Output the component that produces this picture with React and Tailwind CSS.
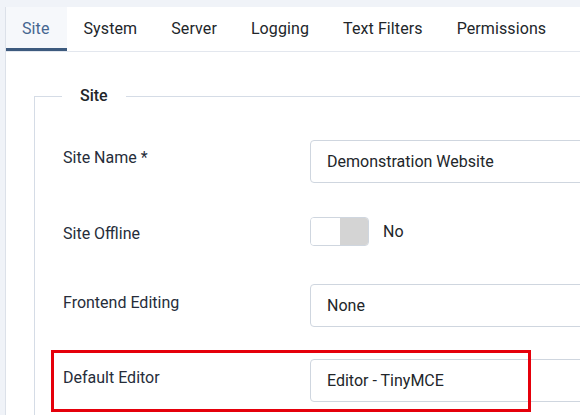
import React from "react";

const tabs = ["Site", "System", "Server", "Logging", "Text Filters", "Permissions"];

const TextInput = ({ value }) => (
  <div className="w-[420px] h-[43px] shrink-0 flex items-center pl-4 border border-[#cfd6df] rounded-[4px] bg-white text-[16px] text-[#22262a]">
    {value}
  </div>
);

const App = () => {
  return (
    <div
      className="w-[580px] h-[415px] overflow-hidden bg-[#f0f3f8] flex flex-col"
      style={{ fontFamily: "Roboto, 'Liberation Sans', sans-serif" }}
    >
      <div className="h-[7px] shrink-0" />
      <div className="flex-1 ml-[5px] w-[700px] bg-white border-l border-[#dce1e9]">
        <div className="flex h-[45px] border-b border-[#e3e7ee]">
          {tabs.map((t, i) =>
            i === 0 ? (
              <div
                key={t}
                className="h-full pl-[16px] pr-[17px] flex items-center pt-[3px] border-b-[3px] border-[#3d5a7e] bg-[#f6f8fb] text-[16px] tracking-[0.1px] text-[#456690]"
              >
                {t}
              </div>
            ) : (
              <div key={t} className="h-full px-[17px] flex items-center text-[16px] tracking-[0.1px] text-[#22262a]">
                {t}
              </div>
            )
          )}
        </div>

        <div className="pl-[28px] pt-[32px]">
          <fieldset className="border border-[#d5dce6] pb-10">
            <legend className="ml-[27px] px-[18px] text-[16px] leading-6 font-medium text-[#22262a]">
              Site
            </legend>

            <div className="pl-[28px]">
              <div className="flex items-start mt-[32px]">
                <label className="w-[247px] shrink-0 pt-[6px] leading-6 text-[16px] text-[#262d3a]">
                  Site Name *
                </label>
                <TextInput value="Demonstration Website" />
              </div>

              <div className="flex items-start mt-[34px]">
                <label className="w-[247px] shrink-0 pt-[5px] leading-6 text-[16px] text-[#262d3a]">
                  Site Offline
                </label>
                <div className="flex items-center">
                  <div className="w-[59px] h-[29px] flex rounded-[4px] border border-[#cfd6df] overflow-hidden">
                    <div className="w-[29px] bg-white" />
                    <div className="flex-1 bg-[#d4d4d4]" />
                  </div>
                  <span className="ml-[14px] text-[16px] text-[#22262a]">No</span>
                </div>
              </div>

              <div className="flex items-start mt-[38px]">
                <label className="w-[247px] shrink-0 pt-[7px] leading-6 text-[16px] text-[#262d3a]">
                  Frontend Editing
                </label>
                <TextInput value="None" />
              </div>

              <div className="relative flex items-start mt-[32px]">
                <label className="w-[247px] shrink-0 pt-[7px] leading-6 text-[16px] text-[#262d3a]">
                  Default Editor
                </label>
                <TextInput value="Editor - TinyMCE" />
                <div className="absolute left-[-12px] top-[-9px] w-[480px] h-[62px] border-[3px] border-[#e5000b]" />
              </div>
            </div>
          </fieldset>
        </div>
      </div>
    </div>
  );
};

export default App;
